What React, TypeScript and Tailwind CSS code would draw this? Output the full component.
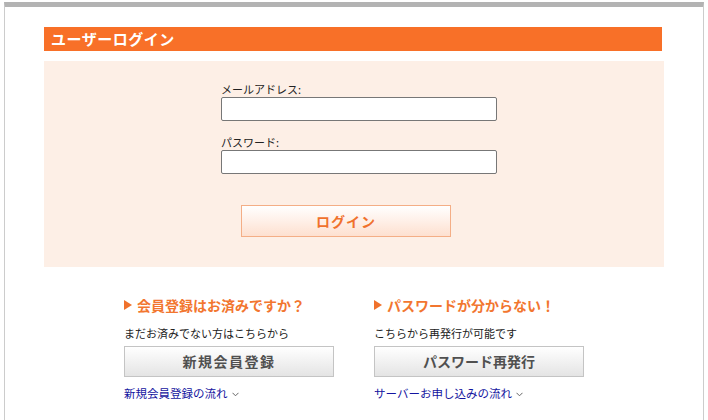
import React from "react";

const jp = { fontFamily: '"Noto Sans CJK JP", "Noto Sans", sans-serif' };

function Tri() {
  return (
    <svg width="8" height="10" viewBox="0 0 8 10" className="mr-[5px] shrink-0">
      <polygon points="0,0 8,5 0,10" fill="#f0712c" />
    </svg>
  );
}

function Chev() {
  return (
    <svg width="7" height="5" viewBox="0 0 7 5" className="ml-[4px] mt-[3px]">
      <polyline points="0.5,0.8 3.5,3.8 6.5,0.8" fill="none" stroke="#666" strokeWidth="1" />
    </svg>
  );
}

function Col({ title, sub, btn, link, wide }: { title: string; sub: string; btn: string; link: string; wide: boolean }) {
  return (
    <div className="w-[210px] flex flex-col">
      <div className="h-[18px] flex items-center text-[14px] leading-[18px] font-bold text-[#f2762f]">
        <Tri />
        <span>{title}</span>
      </div>
      <div className="mt-[11px] h-[16px] leading-[16px] text-[11px] text-[#222]">{sub}</div>
      <div
        className={
          "mt-[5px] h-[31px] border border-[#c4c4c4] bg-gradient-to-b from-white to-[#e4e4e4] flex items-center justify-center text-[14px] font-bold text-[#505050] " +
          (wide ? "tracking-[1.5px]" : "tracking-[0px]")
        }
      >
        {btn}
      </div>
      <div className="mt-[8px] h-[16px] flex items-center text-[11.5px] leading-[16px] text-[#1414a0]">
        <span>{link}</span>
        <Chev />
      </div>
    </div>
  );
}

export default function App() {
  return (
    <div className="w-[708px] h-[420px] bg-white overflow-hidden pt-[2px]" style={jp}>
      <div className="ml-[4px] w-[700px] h-[430px] border-t-[5px] border-t-[#b3b3b3] border-l border-r border-l-[#cccccc] border-r-[#cccccc]">
        <div className="pl-[39px] pt-[20px]">
          <div className="w-[618px] h-[24px] bg-[#f87028] flex items-center pl-[7px] text-white font-bold text-[15px] leading-[24px] tracking-[0.5px]">
            ユーザーログイン
          </div>
          <div className="mt-[10px] w-[620px] bg-[#fdefe6] pt-[20px] pb-[30px]">
            <div className="ml-[177px] h-[16px] leading-[16px] text-[11px] text-[#222]">メールアドレス:</div>
            <div className="ml-[177px] w-[276px] h-[24px] bg-white border border-[#777] rounded-[2px]" />
            <div className="ml-[177px] mt-[13px] h-[16px] leading-[16px] text-[11px] text-[#222]">パスワード:</div>
            <div className="ml-[177px] w-[276px] h-[24px] bg-white border border-[#777] rounded-[2px]" />
            <div className="ml-[197px] mt-[31px] w-[210px] h-[32px] border border-[#f4ae86] bg-gradient-to-b from-white to-[#fde0d0] flex items-center justify-center text-[14px] font-bold text-[#f0712c] tracking-[1px]">
              ログイン
            </div>
          </div>
          <div className="pt-[29px] pl-[80px] flex gap-[40px]">
            <Col title="会員登録はお済みですか？" sub="まだお済みでない方はこちらから" btn="新規会員登録" link="新規会員登録の流れ" wide={true} />
            <Col title="パスワードが分からない！" sub="こちらから再発行が可能です" btn="パスワード再発行" link="サーバーお申し込みの流れ" wide={false} />
          </div>
        </div>
      </div>
    </div>
  );
}
